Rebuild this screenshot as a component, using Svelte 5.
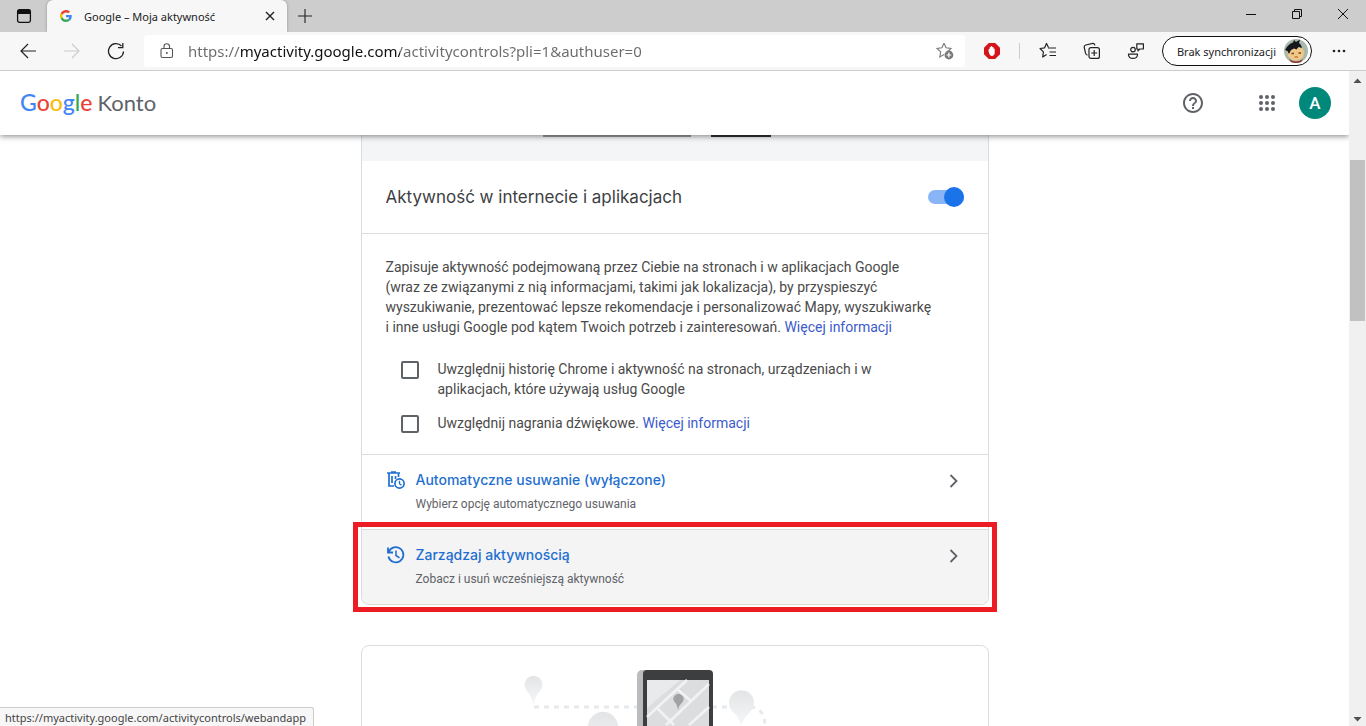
<script>
  let url = "https://myactivity.google.com/activitycontrols?pli=1&authuser=0";
  let tracking = true;
  let chromeHistory = false;
  let recordings = false;

  const actions = [
    {
      icon: "trash",
      title: "Automatyczne usuwanie (wyłączone)",
      text: "Wybierz opcję automatycznego usuwania",
    },
    {
      icon: "history",
      title: "Zarządzaj aktywnością",
      text: "Zobacz i usuń wcześniejszą aktywność",
      marked: true,
    },
  ];
</script>

<div class="browser">
  <div class="tabs">
    <button class="tab-menu" aria-label="Karty">
      <svg width="16" height="16" viewBox="0 0 16 16">
        <rect x="1.6" y="1.6" width="12.8" height="12.8" rx="1.8" fill="none" stroke="#111" stroke-width="1.3" />
        <path d="M1.5 6V3.2Q1.5 1.5 3.2 1.5H12.8Q14.5 1.5 14.5 3.2V6Z" fill="#111" />
      </svg>
    </button>
    <div class="tab">
      <svg width="12" height="12" viewBox="0 0 48 48">
        <path fill="#ea4335" d="M24 9.5c3.54 0 6.71 1.22 9.21 3.6l6.85-6.85C35.9 2.38 30.47 0 24 0 14.62 0 6.51 5.38 2.56 13.22l7.98 6.19C12.43 13.72 17.74 9.5 24 9.5z" />
        <path fill="#4285f4" d="M46.98 24.55c0-1.57-.15-3.09-.38-4.55H24v9.02h12.94c-.58 2.96-2.26 5.48-4.78 7.18l7.73 6c4.51-4.18 7.09-10.36 7.09-17.65z" />
        <path fill="#fbbc05" d="M10.53 28.59a14.5 14.5 0 0 1 0-9.18l-7.98-6.19a24 24 0 0 0 0 21.56l7.98-6.19z" />
        <path fill="#34a853" d="M24 48c6.48 0 11.93-2.13 15.89-5.81l-7.73-6c-2.15 1.45-4.92 2.3-8.16 2.3-6.26 0-11.57-4.22-13.47-9.91l-7.98 6.19C6.51 42.62 14.62 48 24 48z" />
      </svg>
      <span class="tab-title">Google – Moja aktywność</span>
      <button class="tab-close" aria-label="Zamknij kartę">
        <svg width="10" height="10" viewBox="0 0 10 10"><path d="M1 1L9 9M9 1L1 9" stroke="#222" stroke-width="1.4" /></svg>
      </button>
    </div>
    <button class="new-tab" aria-label="Nowa karta">
      <svg width="14" height="14" viewBox="0 0 14 14"><path d="M7 0V14M0 7H14" stroke="#222" stroke-width="1.1" /></svg>
    </button>
    <div class="window-buttons">
      <button aria-label="Minimalizuj">
        <svg width="10" height="10" viewBox="0 0 10 10"><path d="M0 5.5H10" stroke="#111" /></svg>
      </button>
      <button aria-label="Przywróć">
        <svg width="10" height="10" viewBox="0 0 10 10"><path d="M.5 2.5H7.5V9.5H.5ZM2.5 2.5V.5H9.5V7.5H7.5" fill="none" stroke="#111" /></svg>
      </button>
      <button aria-label="Zamknij">
        <svg width="10" height="10" viewBox="0 0 10 10"><path d="M0 0L10 10M10 0L0 10" stroke="#111" /></svg>
      </button>
    </div>
  </div>

  <div class="toolbar">
    <div class="nav">
      <button aria-label="Wstecz">
        <svg width="16" height="16" viewBox="0 0 16 16"><path d="M16 8H1M8 1L1 8L8 15" fill="none" stroke="#222" stroke-width="1.2" /></svg>
      </button>
      <button aria-label="Dalej" disabled>
        <svg width="16" height="16" viewBox="0 0 16 16"><path d="M0 8H15M8 1L15 8L8 15" fill="none" stroke="#ccc" stroke-width="1.2" /></svg>
      </button>
      <button aria-label="Odśwież">
        <svg width="18" height="18" viewBox="0 0 18 18"><path d="M16.5 9.5A7.5 7.5 0 1 1 14.5 4M15.8 1V5.6H11" fill="none" stroke="#222" stroke-width="1.3" /></svg>
      </button>
    </div>
    <div class="address">
      <svg width="14" height="16" viewBox="0 0 14 16">
        <rect x="1" y="5.5" width="11.5" height="9" rx="1.5" fill="none" stroke="#555" stroke-width="1.1" />
        <path d="M4 5.5V3.5a2.75 2.75 0 0 1 5.5 0v2" fill="none" stroke="#555" stroke-width="1.1" />
        <circle cx="6.8" cy="10" r="1" fill="#555" />
      </svg>
      <input class="url" type="text" aria-label="Adres" bind:value={url} />
      <button class="favourite" aria-label="Dodaj do ulubionych">
        <svg width="18" height="18" viewBox="0 0 18 18">
          <path d="M8 1.2L10.1 5.8L15 6.4L12 9.4M8 1.2L5.9 5.8L1 6.4L4.7 9.9L3.8 15L8 12.6" fill="none" stroke="#777" stroke-width="1.1" />
          <circle cx="12.9" cy="13" r="4.4" fill="#777" />
          <path d="M12.9 10.6V15.4M10.5 13H15.3" stroke="#fff" stroke-width="1.2" />
        </svg>
      </button>
    </div>
    <button class="tool block" aria-label="Blokowanie reklam">
      <svg width="16" height="16" viewBox="0 0 16 16">
        <path d="M4.8 0H11.2L16 4.8V11.2L11.2 16H4.8L0 11.2V4.8Z" fill="#d5141b" />
        <path d="M4.6 8.6V6.2q.6-.7 1.1 0V4.2q.6-.8 1.2 0V3.3q.7-.8 1.3 0v1q.6-.7 1.3 0v1.4q.6-.6 1.2.1V10q-.3 2.8-2.8 2.9-1.7 0-2.4-1.6Z" fill="#fff" />
      </svg>
    </button>
    <span class="divider"></span>
    <button class="tool" aria-label="Ulubione">
      <svg width="18" height="18" viewBox="0 0 18 18">
        <path d="M9.5 5.6L7.5 1.5L5.6 5.8L1 6.5L4.4 9.9L3.7 15L7.6 12.5" fill="none" stroke="#222" stroke-width="1.2" stroke-linejoin="round" />
        <path d="M9 6H17M10.5 10H17M10.5 13.5H17" stroke="#222" stroke-width="1.2" />
      </svg>
    </button>
    <button class="tool" aria-label="Kolekcje">
      <svg width="18" height="18" viewBox="0 0 18 18">
        <rect x="6" y="5.6" width="10.4" height="10.8" rx="2" fill="none" stroke="#222" stroke-width="1.2" />
        <path d="M4.5 13.2Q2.8 12.8 2.5 11L1.2 5.2Q1 3.5 2.8 3L9.8 1.4Q11.6 1.2 12 3.4M11.2 8V14M8.2 11H14.2" fill="none" stroke="#222" stroke-width="1.2" />
      </svg>
    </button>
    <button class="tool" aria-label="Opinia">
      <svg width="18" height="18" viewBox="0 0 18 18">
        <circle cx="6" cy="7.6" r="2.3" fill="none" stroke="#222" stroke-width="1.2" />
        <path d="M1.5 12.2H10.5V13Q10 16.4 6 16.4T1.5 13ZM9.8 1.8H16.4V7H12.8L11 8.8V7H9.8Z" fill="none" stroke="#222" stroke-width="1.2" stroke-linejoin="round" />
      </svg>
    </button>
    <button class="profile">
      <span>Brak synchronizacji</span>
      <svg width="24" height="24" viewBox="0 0 24 24">
        <circle cx="12" cy="12" r="12" fill="#a9b9ad" />
        <path d="M5 20Q12 25 19 20L17 23Q12 25 7 23Z" fill="#8e2f26" />
        <path d="M3.5 14Q4 7 12 7.5Q20 7 20 14Q20 21 12 21.4Q4 21 3.5 14Z" fill="#f1c886" />
        <path d="M1 11Q4 5 9 3.5L10 1L12 3L16 .5L15 4Q17.5 5.500 18 9L14.500 8L12.500 10.500L10 9.500L7 11L5 15L3.500 12Z" fill="#15171b" />
        <path d="M7.500 14.5H10M14.500 14H17" stroke="#704726" stroke-width="1.4" />
        <path d="M10.5 18H14" stroke="#a65c36" />
      </svg>
    </button>
    <button class="tool more" aria-label="Więcej">
      <svg width="14" height="4" viewBox="0 0 14 4">
        <circle cx="2" cy="2" r="1.3" fill="#222" /><circle cx="7" cy="2" r="1.3" fill="#222" /><circle cx="12" cy="2" r="1.3" fill="#222" />
      </svg>
    </button>
  </div>

  <div class="viewport">
    <div class="page">
      <header>
        <a class="logo" href="#home">
          <span class="google"><span class="blue">G</span><span class="red">o</span><span class="yellow">o</span><span class="blue">g</span><span class="green">l</span><span class="red">e</span></span>
          <span>Konto</span>
        </a>
        <div class="header-buttons">
          <button aria-label="Pomoc">
            <svg width="24" height="24" viewBox="0 0 24 24" fill="#5f6368">
              <path d="M11 18h2v-2h-2v2zm1-16C6.48 2 2 6.48 2 12s4.48 10 10 10 10-4.48 10-10S17.52 2 12 2zm0 18c-4.41 0-8-3.59-8-8s3.59-8 8-8 8 3.59 8 8-3.59 8-8 8zm0-14c-2.21 0-4 1.79-4 4h2c0-1.1.9-2 2-2s2 .9 2 2c0 2-3 1.75-3 5h2c0-2.25 3-2.5 3-5 0-2.21-1.79-4-4-4z" />
            </svg>
          </button>
          <button class="apps" aria-label="Aplikacje Google">
            <svg width="24" height="24" viewBox="0 0 24 24" fill="#5f6368">
              {#each [6, 12, 18] as y}
                {#each [6, 12, 18] as x}
                  <circle cx={x} cy={y} r="2" />
                {/each}
              {/each}
            </svg>
          </button>
          <button class="avatar">A</button>
        </div>
      </header>

      <main>
        <section class="card">
          <div class="banner">
            <svg width="264" height="2" viewBox="0 0 264 2">
              <rect width="148" height="2" fill="#9a9c9e" />
              <rect width="60" height="2" x="168" fill="#303134" />
            </svg>
          </div>
          <div class="card-title">
            <label for="tracking">Aktywność w internecie i aplikacjach</label>
            <input id="tracking" class="switch" type="checkbox" bind:checked={tracking} />
          </div>
          <div class="details">
            <p>
              Zapisuje aktywność podejmowaną przez Ciebie na stronach i w aplikacjach Google<br />
              (wraz ze związanymi z nią informacjami, takimi jak lokalizacja), by przyspieszyć<br />
              wyszukiwanie, prezentować lepsze rekomendacje i personalizować Mapy, wyszukiwarkę<br />
              i inne usługi Google pod kątem Twoich potrzeb i zainteresowań. <a href="#more">Więcej informacji</a>
            </p>
            <div class="option">
              <input id="chrome" type="checkbox" bind:checked={chromeHistory} />
              <label for="chrome">Uwzględnij historię Chrome i aktywność na stronach, urządzeniach i w aplikacjach, które używają usług Google</label>
            </div>
            <div class="option">
              <input id="audio" type="checkbox" bind:checked={recordings} />
              <div><label for="audio">Uwzględnij nagrania dźwiękowe.</label> <a href="#audio-info">Więcej informacji</a></div>
            </div>
          </div>
          {#each actions as action}
            <a class="action" class:marked={action.marked} href="#{action.icon}">
              {#if action.icon === "trash"}
                <svg width="20" height="20" viewBox="0 0 20 20" fill="none" stroke="#1f6fd0" stroke-width="1.7">
                  <path d="M1 3H14M5 2H10M3 3V16H8M12.5 3V7M6 6V13M9.5 6V9" />
                  <circle cx="13.5" cy="13.5" r="4.6" />
                  <path d="M13.5 10.7V13.7L15.5 15.3" stroke-width="1.3" />
                </svg>
              {:else}
                <svg width="20" height="20" viewBox="0 0 20 20" fill="none" stroke="#1f6fd0" stroke-width="1.8">
                  <path d="M2.7 7A7.6 7.6 0 1 1 2.4 11.5M2 2.5V7.5H7" />
                  <path d="M10 5.5V10.5L13.5 12.8" stroke-width="1.5" />
                </svg>
              {/if}
              <div class="action-text">
                <span class="action-title">{action.title}</span>
                <span class="action-note">{action.text}</span>
              </div>
              <svg class="chevron" width="10" height="16" viewBox="0 0 10 16"><path d="M1.5 2L7.5 8L1.5 14" fill="none" stroke="#5f6368" stroke-width="1.8" /></svg>
            </a>
          {/each}
        </section>

        <section class="card map-card">
          <svg width="300" height="120" viewBox="0 0 300 120">
            <defs>
              <linearGradient id="pin" x2="0" y2="1">
                <stop offset="0" stop-color="#e3e4e6" />
                <stop offset="1" stop-color="#f6f7f8" />
              </linearGradient>
            </defs>
            <path d="M34 47H140M212 47H230" stroke="#e8e9eb" stroke-width="3" stroke-dasharray="5 5" />
            <path d="M250 47Q265 48 265 66V120" fill="none" stroke="#e8e9eb" stroke-width="3" stroke-dasharray="5 5" />
            <path d="M33 44Q31 35 27 31A9 9 0 1 1 40 31Q35 36 34 44Z" fill="url(#pin)" />
            <path d="M103 98Q100 83 93 78A15 15 0 1 1 113 78Q106 85 103 98Z" fill="url(#pin)" />
            <path d="M241 66Q239 57 233 52A12.5 12.5 0 1 1 250 52Q243 59 241 66Z" fill="url(#pin)" />
            <rect x="137" y="10" width="30" height="110" rx="5" fill="#babcbf" />
            <rect x="143" y="10" width="70" height="110" rx="4" fill="#3c3e40" />
            <rect x="147" y="20" width="62" height="100" fill="#dcdddf" />
            <path d="M147 20H180L147 48Z" fill="#e9eaeb" />
            <g stroke="#f2f3f4" stroke-width="2.5" fill="none">
              <path d="M147 57L187 20M166 65L209 24M189 65L209 47M156 47L174 65M177 29L191 41" />
            </g>
            <path d="M178 50Q177 44 174.500 42A5 5 0 1 1 182.500 42Q179 45 178 50Z" fill="#a0a2a4" />
          </svg>
        </section>
      </main>
    </div>

    <div class="scrollbar">
      <svg width="9" height="5" viewBox="0 0 9 5"><path d="M0.5 5L4.5 0.5L8.5 5Z" fill="#505050" /></svg>
      <div class="track"><div class="thumb"></div></div>
      <svg width="9" height="5" viewBox="0 0 9 5"><path d="M0.5 0L4.5 4.5L8.5 0Z" fill="#505050" /></svg>
    </div>
    <div class="status">https://myactivity.google.com/activitycontrols/webandapp</div>
  </div>
</div>

<style>
  :global(body) {
    margin: 0;
    overflow: hidden;
  }

  .browser {
    display: flex;
    flex-direction: column;
    height: 100vh;
    background: #fff;
    color: #222;
    font-family: "Noto Sans", "Open Sans", sans-serif;
    font-size: 11px;
  }

  button {
    display: flex;
    align-items: center;
    justify-content: center;
    padding: 0;
    border: none;
    background: none;
    color: inherit;
    font: inherit;
  }

  a {
    color: #3b5bcc;
    text-decoration: none;
  }

  svg {
    flex: none;
  }

  /* tabs */
  .tabs {
    display: flex;
    height: 32px;
    background: #cdcdcd;
  }

  .tab-menu {
    width: 47px;
  }

  .tab {
    display: flex;
    align-items: center;
    gap: 12px;
    box-sizing: border-box;
    width: 240px;
    padding: 0 12px 0 13px;
    border-radius: 6px 6px 0 0;
    background: #f7f7f7;
    box-shadow: 0 0 3px rgba(0, 0, 0, 0.3);
  }

  .tab-title {
    flex: 1;
    white-space: nowrap;
  }

  .new-tab {
    width: 36px;
  }

  .window-buttons {
    display: flex;
    margin-left: auto;
    padding-bottom: 4px;
  }

  .window-buttons button {
    width: 46px;
  }

  /* toolbar */
  .toolbar {
    display: flex;
    align-items: center;
    z-index: 1;
    height: 38px;
    border-bottom: 1px solid #ccc;
    background: #f7f7f7;
  }

  .nav {
    display: flex;
    padding: 0 6px;
  }

  .nav button {
    width: 44px;
    height: 32px;
  }

  .address {
    display: flex;
    flex: 1;
    align-items: center;
    gap: 14px;
    height: 32px;
    padding: 0 11px 0 16px;
    border-radius: 3px;
    background: #fff;
  }

  .url {
    flex: 1;
    min-width: 0;
    padding: 0;
    border: none;
    outline: none;
    /* only the host is dark, scheme and path are dimmed */
    background: linear-gradient(90deg, #6b6b6b 52px, #111 52px, #111 212px, #6b6b6b 212px);
    background-clip: text;
    -webkit-background-clip: text;
    color: transparent;
    font-family: inherit;
    font-size: 15px;
  }

  .tool {
    width: 44px;
    height: 32px;
  }

  .block {
    width: 54px;
  }

  .divider {
    width: 1px;
    height: 16px;
    margin-right: 6px;
    background: #ccc;
  }

  .profile {
    gap: 8px;
    box-sizing: border-box;
    height: 30px;
    margin-left: 4px;
    padding: 0 3px 0 14px;
    border: 1px solid #111;
    border-radius: 15px;
    background: #fff;
    white-space: nowrap;
  }

  .more {
    width: 54px;
  }

  /* page */
  .viewport {
    display: flex;
    flex: 1;
    position: relative;
    min-height: 0;
  }

  .page {
    display: flex;
    flex: 1;
    flex-direction: column;
    overflow: hidden;
  }

  header {
    display: flex;
    flex: none;
    align-items: center;
    justify-content: space-between;
    z-index: 1;
    height: 64px;
    padding: 0 18px 0 20px;
    background: #fff;
    box-shadow: 0 1px 6px rgba(0, 0, 0, 0.5);
  }

  .logo {
    display: flex;
    align-items: baseline;
    gap: 5px;
    padding-bottom: 2px;
    color: #5f6368;
    font-family: Lato, sans-serif;
    font-size: 22px;
  }

  .google {
    font-size: 23px;
    font-weight: 500;
  }

  .blue {
    color: #4285f4;
  }

  .red {
    color: #ea4335;
  }

  .yellow {
    color: #fbbc05;
  }

  .green {
    color: #34a853;
  }

  .header-buttons {
    display: flex;
    align-items: center;
  }

  .apps {
    margin: 0 20px 0 50px;
  }

  .avatar {
    width: 32px;
    height: 32px;
    border-radius: 50%;
    background: #00897b;
    color: #fff;
    font-family: Roboto, sans-serif;
    font-size: 17px;
    font-weight: 500;
  }

  main {
    display: flex;
    flex-direction: column;
    gap: 40px;
    box-sizing: border-box;
    width: 100%;
    max-width: 628px;
    min-height: 0;
    margin: 0 auto;
    color: #4a4a4a;
    font-family: Roboto, sans-serif;
    font-size: 14px;
    line-height: 20px;
  }

  .card {
    flex: none;
    border: 1px solid #dadce0;
    border-radius: 8px;
  }

  .card:first-child {
    border-top: none;
    border-radius: 0 0 8px 8px;
  }

  .banner {
    display: flex;
    justify-content: center;
    height: 26px;
    background: #f4f5f7;
  }

  .card-title {
    display: flex;
    align-items: center;
    justify-content: space-between;
    height: 72px;
    padding: 0 24px;
    border-bottom: 1px solid #dadce0;
    color: #3c4043;
    font-family: Inter, Lato, sans-serif;
    font-size: 17px;
  }

  .switch {
    appearance: none;
    display: flex;
    align-items: center;
    justify-content: flex-start;
    width: 36px;
    height: 14px;
    margin: 0;
    border-radius: 7px;
    background: #bdc1c6;
  }

  .switch::before {
    content: "";
    width: 20px;
    height: 20px;
    flex: none;
    border-radius: 50%;
    background: #fff;
  }

  .switch:checked {
    justify-content: flex-end;
    background: #8ab4f8;
  }

  .switch:checked::before {
    background: #1a73e8;
  }

  .details {
    display: flex;
    flex-direction: column;
    gap: 14px;
    padding: 23px 24px 21px;
    border-bottom: 1px solid #dadce0;
  }

  p {
    margin: 0 0 8px;
  }

  .option {
    display: flex;
    gap: 18px;
    padding: 0 50px 0 15px;
  }

  .option input {
    appearance: none;
    flex: none;
    box-sizing: border-box;
    width: 18px;
    height: 18px;
    margin: 2px 1px 0 0;
    border: 2px solid #5f6368;
    border-radius: 2px;
  }

  .option input:checked {
    background: #1a73e8;
  }

  .action {
    display: flex;
    position: relative;
    align-items: flex-start;
    gap: 10px;
    padding: 15px 29px 15px 24px;
  }

  .action-text {
    display: flex;
    flex: 1;
    flex-direction: column;
    gap: 4px;
  }

  .action-title {
    color: #1f6fd0;
    font-family: Inter, Lato, sans-serif;
    font-weight: 500;
  }

  .action-note {
    color: #5f6368;
    font-size: 12px;
  }

  .chevron {
    margin-top: 3px;
  }

  .marked {
    border-top: 1px solid #dadce0;
    border-radius: 0 0 8px 8px;
    background: #f4f4f4;
  }

  .marked::after {
    content: "";
    position: absolute;
    inset: -8px -9px;
    border: 5px solid #ed1c24;
  }

  .map-card {
    display: flex;
    justify-content: center;
    padding: 14px 50px 0 0;
  }

  .scrollbar {
    display: flex;
    flex-direction: column;
    align-items: center;
    justify-content: space-between;
    box-sizing: border-box;
    width: 17px;
    padding: 7px 0 4px;
    background: #f0f0f0;
  }

  .track {
    flex: 1;
    align-self: stretch;
    padding: 77px 1px 0;
  }

  .thumb {
    height: 161px;
    background: #c1c1c1;
  }

  .status {
    position: absolute;
    z-index: 2;
    bottom: 0;
    left: 0;
    padding: 2px 7px 0 5px;
    border: 1px solid #ccc;
    border-width: 1px 1px 0 0;
    border-radius: 0 3px 0 0;
    background: #f7f7f7;
    color: #444;
    line-height: 16px;
  }
</style>
